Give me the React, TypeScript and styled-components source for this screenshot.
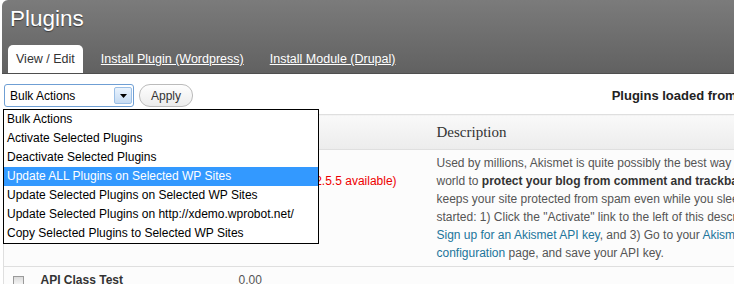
import { createGlobalStyle, styled } from 'styled-components';

const GlobalStyle = createGlobalStyle`
    body {
        margin: 0;
        overflow: hidden;
        background: #fff;
        font-family: 'Liberation Sans', Arial, sans-serif;
    }
`;

const Page = styled.div`
    width: 741px;
    height: 284px;
    overflow: hidden;
`;

const Header = styled.div`
    margin-left: 2px;
    height: 73px;
    border-radius: 6px 0 0 0;
    border-bottom: 1px solid #4e4e4e;
    background: linear-gradient(#7b7b7b, #616161);
    display: flex;
    flex-direction: column;
`;

const Title = styled.h1`
    margin: 0;
    padding: 6px 0 0 8px;
    font-size: 22.5px;
    line-height: 26px;
    font-weight: normal;
    color: #fff;
    text-shadow: 0 1px 1px #3a3a3a;
`;

const Tabs = styled.div`
    display: flex;
    gap: 10px;
    margin-top: 13px;
    padding-left: 6px;
`;

const Tab = styled.a<{ $active?: boolean }>`
    height: 28px;
    padding: 0 8px;
    display: flex;
    align-items: center;
    font-size: 12.5px;
    border-radius: 5px 5px 0 0;
    background: ${(p) => (p.$active ? '#fff' : 'transparent')};
    color: ${(p) => (p.$active ? '#333' : '#fff')};
    text-decoration: ${(p) => (p.$active ? 'none' : 'underline')};
`;

const Toolbar = styled.div`
    position: relative;
    z-index: 2;
    display: flex;
    align-items: center;
    gap: 5px;
    margin: 10px 0 0 4px;
    height: 23px;
`;

const SelectWrap = styled.div`
    position: relative;
`;

const SelectBox = styled.div`
    box-sizing: border-box;
    width: 130px;
    height: 23px;
    border: 1px solid #6f9fd4;
    border-radius: 3px;
    background: #fff;
    display: flex;
    align-items: center;
    justify-content: space-between;
    padding: 0 1px 0 5px;
    font-size: 12px;
    color: #000;
`;

const ArrowButton = styled.span`
    box-sizing: border-box;
    width: 18px;
    height: 17px;
    border: 1px solid #9bbfe6;
    border-radius: 2px;
    background: linear-gradient(#eaf3fd, #c5dbf3);
    display: flex;
    align-items: center;
    justify-content: center;
`;

const DropList = styled.ul`
    position: absolute;
    top: 25px;
    left: -1px;
    box-sizing: border-box;
    width: 316px;
    margin: 0;
    padding: 0;
    list-style: none;
    background: #fff;
    border: 1px solid #000;
`;

const DropItem = styled.li<{ $selected?: boolean }>`
    height: 19px;
    line-height: 19px;
    padding-left: 3px;
    font-size: 12px;
    white-space: nowrap;
    background: ${(p) => (p.$selected ? '#3399ff' : 'transparent')};
    color: ${(p) => (p.$selected ? '#fff' : '#000')};
`;

const ApplyButton = styled.button`
    height: 23px;
    width: 54px;
    padding: 0;
    border: 1px solid #bbb;
    border-radius: 11px;
    background: linear-gradient(#fefefe, #ececec);
    font-family: inherit;
    font-size: 12px;
    color: #333;
`;

const Status = styled.div`
    margin-left: auto;
    font-size: 13px;
    font-weight: bold;
    color: #222;
    white-space: nowrap;
`;

const Table = styled.table`
    margin: 7px 0 0 3px;
    width: 738px;
    border-collapse: collapse;
    border-left: 1px solid #dfdfdf;
    border-top: 1px solid #dfdfdf;
    table-layout: fixed;
`;

const HeadCell = styled.th`
    height: 34px;
    padding: 0 7px;
    text-align: left;
    font-family: 'Liberation Serif', Georgia, serif;
    font-size: 15px;
    font-weight: normal;
    color: #333;
    background: linear-gradient(#f9f9f9, #ececec);
    border-bottom: 1px solid #dfdfdf;
`;

const Row = styled.tr`
    background: #fcfcfc;
    border-bottom: 1px solid #dfdfdf;
`;

const Cell = styled.td`
    vertical-align: top;
    padding: 4px 7px;
    font-size: 12px;
    line-height: 18px;
    color: #555;
    white-space: nowrap;
    overflow: hidden;
`;

const CheckCell = styled(Cell)`
    padding: 9px 0 0 9px;
`;

const CheckBox = styled.span`
    display: block;
    box-sizing: border-box;
    width: 11px;
    height: 11px;
    border: 1px solid #9a9a9a;
    background: linear-gradient(#dcdcdc, #fafafa);
`;

const Name = styled.strong`
    color: #333;
`;

const Red = styled.span`
    color: #e00;
`;

const Link = styled.a`
    color: #21759b;
    text-decoration: none;
`;

const Strong = styled.strong`
    color: #333;
`;

const actions = [
    'Bulk Actions',
    'Activate Selected Plugins',
    'Deactivate Selected Plugins',
    'Update ALL Plugins on Selected WP Sites',
    'Update Selected Plugins on Selected WP Sites',
    'Update Selected Plugins on http://xdemo.wprobot.net/',
    'Copy Selected Plugins to Selected WP Sites',
];

export default function App() {
    return (
        <Page>
            <GlobalStyle />
            <Header>
                <Title>Plugins</Title>
                <Tabs>
                    <Tab $active>View / Edit</Tab>
                    <Tab>Install Plugin (Wordpress)</Tab>
                    <Tab>Install Module (Drupal)</Tab>
                </Tabs>
            </Header>
            <Toolbar>
                <SelectWrap>
                    <SelectBox>
                        <span>Bulk Actions</span>
                        <ArrowButton>
                            <svg width="7" height="4" viewBox="0 0 7 4">
                                <path d="M0 0h7L3.5 4z" fill="#000" />
                            </svg>
                        </ArrowButton>
                    </SelectBox>
                    <DropList>
                        {actions.map((a, i) => (
                            <DropItem key={a} $selected={i === 3}>
                                {a}
                            </DropItem>
                        ))}
                    </DropList>
                </SelectWrap>
                <ApplyButton>Apply</ApplyButton>
                <Status>Plugins loaded from:</Status>
            </Toolbar>
            <Table>
                <colgroup>
                    <col style={{ width: 30 }} />
                    <col style={{ width: 198 }} />
                    <col style={{ width: 198 }} />
                    <col />
                </colgroup>
                <thead>
                    <tr>
                        <HeadCell />
                        <HeadCell>Plugin</HeadCell>
                        <HeadCell>Version</HeadCell>
                        <HeadCell>Description</HeadCell>
                    </tr>
                </thead>
                <tbody>
                    <Row>
                        <CheckCell>
                            <CheckBox />
                        </CheckCell>
                        <Cell>
                            <Name>Akismet</Name>
                        </Cell>
                        <Cell>
                            2.5.3
                            <br />
                            <Red>New version: (2.5.5 available)</Red>
                        </Cell>
                        <Cell>
                            Used by millions, Akismet is quite possibly the best way in the
                            <br />
                            world to <Strong>protect your blog from comment and trackback spam</Strong>. It
                            <br />
                            keeps your site protected from spam even while you sleep. To get
                            <br />
                            started: 1) Click the "Activate" link to the left of this description, 2)
                            <br />
                            <Link>Sign up for an Akismet API key</Link>, and 3) Go to your <Link>Akismet</Link>
                            <br />
                            <Link>configuration</Link> page, and save your API key.
                        </Cell>
                    </Row>
                    <Row>
                        <CheckCell>
                            <CheckBox />
                        </CheckCell>
                        <Cell>
                            <Name>API Class Test</Name>
                        </Cell>
                        <Cell>0.00</Cell>
                        <Cell />
                    </Row>
                </tbody>
            </Table>
        </Page>
    );
}
